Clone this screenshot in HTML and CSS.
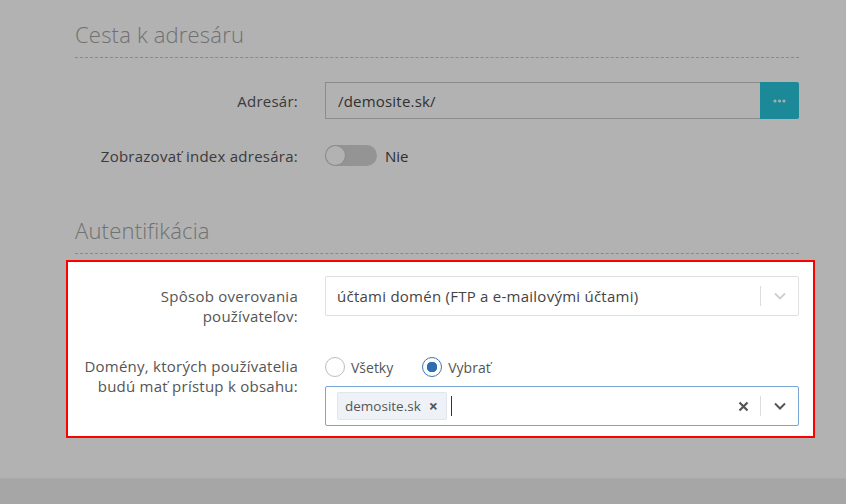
FILE: index.html
```html
<!DOCTYPE html>
<html lang="sk">
<head>
  <meta charset="UTF-8" />
  <meta name="viewport" content="width=device-width, initial-scale=1.0"/>
  <title>Nastavenia adresára</title>
  <link rel="stylesheet" href="styles.css">
</head>
<body>
  <div class="page">
    <!-- Cesta -->
    <h2 class="section-title">Cesta k adresáru</h2>

    <div class="form-row">
      <label class="form-label">Adresár:</label>
      <div class="form-control">
        <div class="input-group">
          <div class="text-input">/demosite.sk/</div>
          <button class="btn-browse">
            <svg width="13" height="4" viewBox="0 0 13 4"><circle cx="2" cy="2" r="1.6" fill="#eef9fb"/><circle cx="6.5" cy="2" r="1.6" fill="#eef9fb"/><circle cx="11" cy="2" r="1.6" fill="#eef9fb"/></svg>
          </button>
        </div>
      </div>
    </div>

    <div class="form-row">
      <label class="form-label">Zobrazovať index adresára:</label>
      <div class="form-control toggle-wrap">
        <span class="toggle"><span class="toggle-knob"></span></span>
        <span class="toggle-text">Nie</span>
      </div>
    </div>

    <!-- Autentifikácia -->
    <h2 class="section-title section-title-second">Autentifikácia</h2>

    <div class="highlight">
      <div class="form-row form-row-top">
        <label class="form-label label-pad">Spôsob overovania<br>používateľov:</label>
        <div class="form-control">
          <div class="select">
            <div class="select-value">účtami domén (FTP a e-mailovými účtami)</div>
            <div class="select-indicators">
              <span class="select-sep"></span>
              <span class="select-arrow">
                <svg width="12" height="8" viewBox="0 0 12 8"><path d="M1 1.5l5 5 5-5" fill="none" stroke="#cfcfcf" stroke-width="1.8"/></svg>
              </span>
            </div>
          </div>
        </div>
      </div>

      <div class="form-row form-row-top">
        <label class="form-label">Domény, ktorých používatelia<br>budú mať prístup k obsahu:</label>
        <div class="form-control">
          <div class="radios">
            <label class="radio"><span class="radio-circle"></span>Všetky</label>
            <label class="radio"><span class="radio-circle checked"></span>Vybrať</label>
          </div>
          <div class="select select-multi">
            <div class="select-value">
              <span class="tag">demosite.sk <span class="tag-remove">&times;</span></span>
              <span class="caret"></span>
            </div>
            <div class="select-indicators">
              <span class="select-clear">
                <svg width="11" height="11" viewBox="0 0 11 11"><path d="M1.5 1.5l8 8M9.5 1.5l-8 8" fill="none" stroke="#555" stroke-width="2.2"/></svg>
              </span>
              <span class="select-sep"></span>
              <span class="select-arrow">
                <svg width="12" height="8" viewBox="0 0 12 8"><path d="M1 1.5l5 5 5-5" fill="none" stroke="#555" stroke-width="2"/></svg>
              </span>
            </div>
          </div>
        </div>
      </div>
    </div>
  </div>

  <div class="footer-bar"></div>

  <!-- Stmavenie okolo zvýraznenej časti -->
  <div class="overlay"></div>
</body>
</html>
```

FILE: styles.css
```css
body {
  margin: 0;
  background: #fff;
  font-family: "Open Sans", "Liberation Sans", sans-serif;
  font-size: 14px;
  color: #555;
  overflow: hidden;
}

.page {
  padding: 0 47px 0 75px;
}

.section-title {
  margin: 19px 0 24px;
  padding-bottom: 8px;
  border-bottom: 1px dashed #c4c4c4;
  font-size: 22px;
  font-weight: 300;
  line-height: 30px;
  letter-spacing: 0.2px;
  color: #a2a2a2;
}

.section-title-second {
  margin-top: 41px;
  margin-bottom: 6px;
}

.form-row {
  display: grid;
  grid-template-columns: 223px 1fr;
  column-gap: 27px;
  align-items: center;
  min-height: 37px;
  margin-bottom: 18px;
}

.form-row-top {
  align-items: start;
  margin-bottom: 30px;
}

.form-row-top:last-child {
  margin-bottom: 0;
}

.form-label {
  text-align: right;
  font-size: 15px;
  line-height: 20px;
  letter-spacing: 0.25px;
  color: #555;
  white-space: nowrap;
}

.label-pad {
  padding-top: 10px;
}

/* input s tlačidlom */
.input-group {
  display: flex;
  height: 37px;
}

.text-input {
  flex: 1;
  display: flex;
  align-items: center;
  padding: 0 12px;
  border: 1px solid #c9c9c9;
  border-right: none;
  font-size: 15px;
  letter-spacing: 0.2px;
  color: #474747;
}

.btn-browse {
  display: flex;
  align-items: center;
  justify-content: center;
  width: 39px;
  border: none;
  border-radius: 0 2px 2px 0;
  background: #27c4da;
  padding: 0;
}

/* prepínač */
.toggle-wrap {
  display: flex;
  align-items: center;
  gap: 8px;
}

.toggle {
  display: flex;
  align-items: center;
  width: 52px;
  height: 21px;
  border-radius: 11px;
  background: #d4d4d4;
}

.toggle-knob {
  width: 19px;
  height: 19px;
  margin-left: 1px;
  border-radius: 50%;
  background: #fff;
  box-shadow: 0 0 0 1px #c8c8c8;
}

.toggle-text {
  font-size: 15px;
  color: #444;
}

/* zvýraznená časť */
.highlight {
  position: relative;
  z-index: 11;
  margin: 0 -16px 40px -9px;
  padding: 14px 14px 10px 7px;
  border: 2px solid #ff0000;
  background: #fff;
}

/* select */
.select {
  display: flex;
  align-items: center;
  height: 40px;
  border: 1px solid #e0e0e0;
  border-radius: 2px;
  box-sizing: border-box;
}

.select-value {
  flex: 1;
  display: flex;
  align-items: center;
  padding-left: 11px;
  font-size: 15px;
  letter-spacing: 0.25px;
  color: #444;
}

.select-indicators {
  display: flex;
  align-items: center;
  height: 100%;
}

.select-sep {
  width: 1px;
  height: 20px;
  background: #dcdcdc;
}

.select-arrow {
  display: flex;
  justify-content: center;
  width: 37px;
}

.select-clear {
  display: flex;
  justify-content: center;
  width: 33px;
}

.select-multi {
  border-color: #7aa5d4;
}

.tag {
  display: inline-flex;
  align-items: center;
  height: 28px;
  padding: 0 8px 0 7px;
  box-sizing: border-box;
  border: 1px solid #dfe6ee;
  border-radius: 2px;
  background: #eef2f7;
  font-size: 13.5px;
  letter-spacing: 0;
  color: #555;
}

.tag-remove {
  margin-left: 8px;
  font-size: 16px;
  font-weight: bold;
  color: #555;
}

.caret {
  width: 1px;
  height: 20px;
  margin-left: 4px;
  background: #333;
}

/* rádiá */
.radios {
  display: flex;
  gap: 29px;
  height: 20px;
  margin: 1px 0 9px;
}

.radio {
  display: flex;
  align-items: center;
  gap: 6px;
  font-size: 14px;
  color: #555;
}

.radio-circle {
  width: 20px;
  height: 20px;
  box-sizing: border-box;
  border: 1px solid #bdbdbd;
  border-radius: 50%;
  background: #fff;
}

.radio-circle.checked {
  border-color: #3a76b8;
  background: radial-gradient(circle, #2f6db3 0 5px, #fff 5.5px);
}

.footer-bar {
  height: 60px;
  border-top: 1px solid #f4f4f4;
  background: #eeeeee;
}

.overlay {
  position: fixed;
  inset: 0;
  z-index: 10;
  background: rgba(0, 0, 0, 0.3);
}
```
